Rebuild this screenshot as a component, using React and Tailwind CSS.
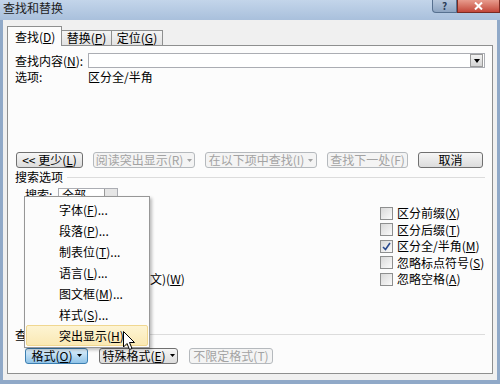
import React from 'react';

const font = "font-['Noto_Sans_CJK_SC','Liberation_Sans',sans-serif]";

function Caret({ color = '#000' }) {
    return (
        <svg width="5" height="3" viewBox="0 0 5 3" className="ml-[4px]">
            <path d="M0 0 H5 L2.5 3 Z" fill={color} />
        </svg>
    );
}

function Button({ children, width, disabled, pressed, caret }) {
    let look = 'border-[#707070] bg-gradient-to-b from-[#f6f6f6] to-[#dcdcdc] text-black';
    if (disabled) look = 'border-[#b5b9bd] bg-[#f4f4f4] text-[#a3a3a3]';
    if (pressed) look = 'border-[#3c7fb1] bg-gradient-to-b from-[#e0f1fc] to-[#8fc3e8] text-black';
    return (
        <div
            className={`flex h-[16px] shrink-0 items-center justify-center rounded-[3px] border text-[12px] leading-none ${look}`}
            style={{ width }}
        >
            <span>{children}</span>
            {caret && <Caret color={disabled ? '#a3a3a3' : '#000'} />}
        </div>
    );
}

function Checkbox({ checked }) {
    return (
        <div className="flex h-[13px] w-[13px] shrink-0 items-center justify-center border border-[#8e8f8f] bg-gradient-to-br from-[#d9d9d9] to-[#fbfbfb]">
            {checked && (
                <svg width="9" height="9" viewBox="0 0 9 9">
                    <path d="M1 5 L3.5 7.5 L8 1" fill="none" stroke="#2a4a8e" strokeWidth="1.6" />
                </svg>
            )}
        </div>
    );
}

const rightOptions = [
    ['区分前缀', 'X', false],
    ['区分后缀', 'T', false],
    ['区分全/半角', 'M', true],
    ['忽略标点符号', 'S', false],
    ['忽略空格', 'A', false],
];

const menuItems = [
    ['字体', 'F', '...'],
    ['段落', 'P', '...'],
    ['制表位', 'T', '...'],
    ['语言', 'L', '...'],
    ['图文框', 'M', '...'],
    ['样式', 'S', '...'],
    ['突出显示', 'H', ''],
];

function Acc({ label, k, tail = '' }) {
    return (
        <span>
            {label}(<u>{k}</u>){tail}
        </span>
    );
}

export default function App() {
    return (
        <div className={`relative flex h-[384px] w-[500px] flex-col overflow-hidden bg-[#90a9c8] text-[12px] text-black ${font}`}>
            {/* title bar */}
            <div className="flex h-[20px] shrink-0 items-start justify-between bg-gradient-to-b from-[#c3d5ea] to-[#a9c0dc]">
                <div className="pl-[3px] pt-[1px] text-[12px] leading-[14px] text-[#1c1c1c]">查找和替换</div>
                <div className="flex">
                    <div className="flex h-[13px] w-[25px] items-center justify-center rounded-bl-[4px] border border-t-0 border-[#56708f] bg-gradient-to-b from-[#b7c8dd] to-[#8ea5c2] text-[10px] font-bold leading-[10px] text-[#2c3e58]">
                        ?
                    </div>
                    <div className="flex h-[13px] w-[43px] items-center justify-center border border-t-0 border-[#7a2a22] bg-gradient-to-b from-[#e79b8d] to-[#c2463a]">
                        <svg width="9" height="8" viewBox="0 0 9 8">
                            <path d="M1 0.5 L8 7.5 M8 0.5 L1 7.5" stroke="#fff" strokeWidth="2" />
                        </svg>
                    </div>
                </div>
            </div>

            {/* dialog body */}
            <div className="mx-[3px] flex h-[360px] flex-col bg-[#f0f0f0] px-[4px]">
                {/* tabs */}
                <div className="flex h-[25px] shrink-0 items-end">
                    <div className="relative z-10 -mb-[1px] flex h-[20px] w-[55px] items-center border border-b-0 border-[#8e8f8f] bg-[#fcfcfc] pl-[7px] leading-none">
                        <Acc label="查找" k="D" />
                    </div>
                    <div className="flex h-[15px] w-[50px] items-center justify-center border border-b-0 border-l-0 border-[#8e8f8f] bg-gradient-to-b from-[#f4f4f4] to-[#e2e2e2] leading-none">
                        <Acc label="替换" k="P" />
                    </div>
                    <div className="flex h-[15px] w-[51px] items-center justify-center border border-b-0 border-l-0 border-[#8e8f8f] bg-gradient-to-b from-[#f4f4f4] to-[#e2e2e2] leading-none">
                        <Acc label="定位" k="G" />
                    </div>
                </div>

                {/* tab panel */}
                <div className="flex h-[329px] shrink-0 flex-col border border-[#8e8f8f] bg-[#fcfcfc] px-[7px] pt-[7px]">
                    <div className="flex h-[15px] items-center">
                        <div className="w-[73px] leading-none">
                            <Acc label="查找内容" k="N" tail=":" />
                        </div>
                        <div className="flex h-[15px] flex-1 items-center justify-end border border-[#abadb3] bg-white pr-[1px]">
                            <div className="flex h-[13px] w-[13px] items-center justify-center border border-[#9a9a9a] bg-gradient-to-b from-[#f2f2f2] to-[#d4d4d4]">
                                <svg width="6" height="4" viewBox="0 0 6 4">
                                    <path d="M0 0 H6 L3 4 Z" fill="#000" />
                                </svg>
                            </div>
                        </div>
                    </div>
                    <div className="mt-[2px] flex h-[14px] items-center leading-none">
                        <div className="w-[73px]">选项:</div>
                        <div>区分全/半角</div>
                    </div>

                    <div className="ml-[1px] mt-[68px] flex gap-[10px]">
                        <Button width={67}>
                            {'<< '}更少(<u>L</u>)
                        </Button>
                        <Button width={102} disabled caret>
                            阅读突出显示(R)
                        </Button>
                        <Button width={112} disabled caret>
                            在以下项中查找(I)
                        </Button>
                        <Button width={81} disabled>
                            查找下一处(F)
                        </Button>
                        <Button width={65}>取消</Button>
                    </div>

                    <div className="mt-[2px] flex h-[14px] items-center gap-[4px] leading-none">
                        <span>搜索选项</span>
                        <div className="h-px flex-1 bg-[#dcdcdc]" />
                    </div>

                    <div className="mt-[4px] flex h-[14px] items-center pl-[10px] leading-none">
                        <div className="w-[33px]">搜索:</div>
                        <div className="flex h-[14px] w-[60px] items-center justify-between border border-[#abadb3] bg-white pl-[3px]">
                            <span>全部</span>
                            <div className="h-[12px] w-[13px] border-l border-[#9a9a9a] bg-[#e6e6e6]" />
                        </div>
                    </div>

                    <div className="mt-[3px] flex">
                        {/* left column is covered by the menu; only the tail of its last label shows */}
                        <div className="flex w-[365px] flex-col justify-end pl-[135px]">
                            <div className="flex h-[16.5px] items-center leading-none">
                                <span>
                                    文)(<u>W</u>)
                                </span>
                            </div>
                        </div>
                        <div>
                            {rightOptions.map(([label, k, checked]) => (
                                <div key={k} className="flex h-[16.5px] items-center gap-[4px] leading-none">
                                    <Checkbox checked={checked} />
                                    <Acc label={label} k={k} />
                                </div>
                            ))}
                        </div>
                    </div>

                    <div className="mt-[40px] flex h-[14px] items-center gap-[4px] leading-none">
                        <span>查找</span>
                        <div className="h-px flex-1 bg-[#dcdcdc]" />
                    </div>

                    <div className="ml-[10px] mt-[6px] flex gap-[11px]">
                        <Button width={63} pressed caret>
                            格式(<u>O</u>)
                        </Button>
                        <Button width={79} caret>
                            特殊格式(<u>E</u>)
                        </Button>
                        <Button width={84} disabled>
                            不限定格式(T)
                        </Button>
                    </div>
                </div>
            </div>

            {/* format dropdown menu */}
            <div className="absolute left-[24px] top-[196px] w-[126px] border border-[#979797] bg-[#fcfcfc] pb-[1px] pt-[2px] shadow-[2px_2px_3px_rgba(0,0,0,0.25)]">
                {menuItems.map(([label, k, tail], i) => (
                    <div
                        key={k}
                        className={`mx-[1px] flex h-[21px] items-center pl-[32px] leading-none ${
                            i === menuItems.length - 1
                                ? 'rounded-[2px] border border-[#f0d790] bg-gradient-to-b from-[#fdf4d3] to-[#fae9b4]'
                                : 'border border-transparent'
                        }`}
                    >
                        <Acc label={label} k={k} tail={tail} />
                    </div>
                ))}
            </div>

            {/* mouse pointer */}
            <svg className="absolute left-[123px] top-[331px]" width="13" height="20" viewBox="0 0 13 20">
                <path
                    d="M0.5 0.5 L0.5 16 L4 12.5 L6.5 18.5 L9 17.5 L6.5 11.5 L11.5 11.5 Z"
                    fill="#fff"
                    stroke="#000"
                    strokeWidth="1"
                    strokeLinejoin="round"
                />
            </svg>
        </div>
    );
}
